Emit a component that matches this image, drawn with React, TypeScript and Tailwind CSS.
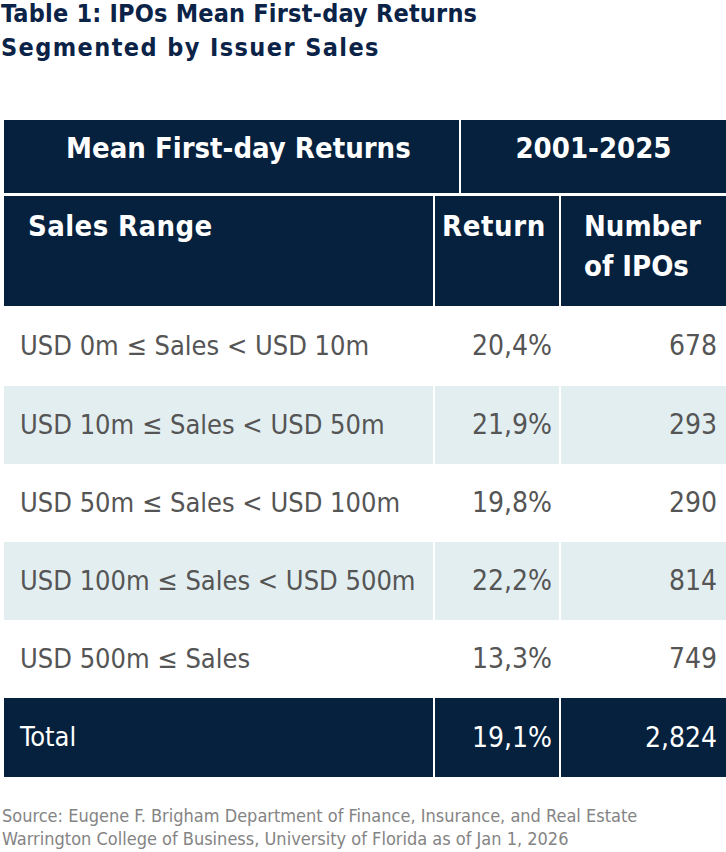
import React from "react";

const rows = [
  { range: "USD 0m ≤ Sales < USD 10m", ret: "20,4%", n: "678" },
  { range: "USD 10m ≤ Sales < USD 50m", ret: "21,9%", n: "293" },
  { range: "USD 50m ≤ Sales < USD 100m", ret: "19,8%", n: "290" },
  { range: "USD 100m ≤ Sales < USD 500m", ret: "22,2%", n: "814" },
  { range: "USD 500m ≤ Sales", ret: "13,3%", n: "749" },
];

export default function App() {
  return (
    <div className="w-[726px] h-[852px] bg-white overflow-hidden font-['DejaVu_Sans_Condensed','DejaVu_Sans',sans-serif]">
      {/* Title */}
      <h1 className="text-[25px] leading-[34px] font-bold text-[#0b2347] pl-[1px] -mt-[3px]">
        <span className="tracking-[0.2px]">Table 1: IPOs Mean First-day Returns</span>
        <br />
        <span className="tracking-[1.4px]">Segmented by Issuer Sales</span>
      </h1>

      {/* Table */}
      <div className="mt-[55px] ml-[4px] w-[722px] flex flex-col bg-white">
        {/* header row 1 */}
        <div className="flex gap-[2px] h-[73px] text-white font-bold text-[29px]">
          <div className="w-[455px] bg-[#05213e] pt-[7px] pl-[62px]">Mean First-day Returns</div>
          <div className="flex-1 bg-[#05213e] pt-[7px] text-center">2001-2025</div>
        </div>
        {/* header row 2 */}
        <div className="flex gap-[2px] h-[110px] mt-[3px] text-white font-bold text-[29px] leading-[40px]">
          <div className="w-[429px] bg-[#05213e] pt-[10px] pl-[24px] tracking-[0.4px]">Sales Range</div>
          <div className="w-[124px] bg-[#05213e] pt-[10px] pl-[7px] tracking-[0.6px]">Return</div>
          <div className="flex-1 bg-[#05213e] pt-[10px] pl-[23px]">
            Number
            <br />
            of IPOs
          </div>
        </div>

        {/* body rows */}
        {rows.map((r, i) => {
          const light = i % 2 === 1;
          const bg = light ? "bg-[#e3eef0]" : "bg-white";
          const h = i === 0 ? "h-[80px]" : "h-[78px]";
          return (
            <div key={r.range} className={`flex gap-[2px] ${h} text-[#555555]`}>
              <div className={`w-[429px] ${bg} flex items-center pl-[16px] text-[27px]`}>{r.range}</div>
              <div className={`w-[124px] ${bg} flex items-center justify-end pr-[7px] text-[28px]`}>{r.ret}</div>
              <div className={`flex-1 ${bg} flex items-center justify-end pr-[9px] text-[28px]`}>{r.n}</div>
            </div>
          );
        })}

        {/* total */}
        <div className="flex gap-[2px] h-[79px] text-white">
          <div className="w-[429px] bg-[#05213e] flex items-center pl-[16px] text-[27px]">Total</div>
          <div className="w-[124px] bg-[#05213e] flex items-center justify-end pr-[7px] text-[28px]">19,1%</div>
          <div className="flex-1 bg-[#05213e] flex items-center justify-end pr-[9px] text-[28px]">2,824</div>
        </div>
      </div>

      {/* Source */}
      <p className="mt-[27px] pl-[2px] text-[18px] leading-[23px] text-[#848484]">
        Source: Eugene F. Brigham Department of Finance, Insurance, and Real Estate
        <br />
        Warrington College of Business, University of Florida as of Jan 1, 2026
      </p>
    </div>
  );
}
